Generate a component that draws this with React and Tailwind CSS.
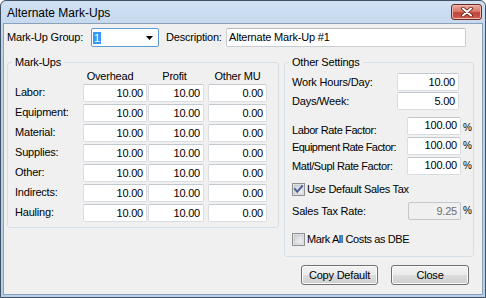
import React from 'react';

const markUps = [
  ['Labor:', '10.00', '10.00', '0.00'],
  ['Equipment:', '10.00', '10.00', '0.00'],
  ['Material:', '10.00', '10.00', '0.00'],
  ['Supplies:', '10.00', '10.00', '0.00'],
  ['Other:', '10.00', '10.00', '0.00'],
  ['Indirects:', '10.00', '10.00', '0.00'],
  ['Hauling:', '10.00', '10.00', '0.00'],
];

const Field = ({ value, className = '', disabled = false, top = false }) => (
  <div
    className={`h-[18px] shrink-0 flex justify-end pr-[3px] border rounded-[2px] leading-[13px] ${
      top ? 'items-start pt-[1px]' : 'items-center'
    } ${
      disabled
        ? 'bg-[#f0f0f0] border-[#c4c7cb] text-[#6d6d6d]'
        : 'bg-white border-[#d9dde1] border-t-[#c3c8ce]'
    } ${className}`}
  >
    {value}
  </div>
);

const CheckBox = ({ checked }) => (
  <svg width="13" height="13" viewBox="0 0 13 13" className="shrink-0">
    <defs>
      <linearGradient id={checked ? 'cbOn' : 'cbOff'} x1="0" y1="0" x2="1" y2="1">
        <stop offset="0" stopColor="#cbcfd5" />
        <stop offset="1" stopColor="#f7f7f7" />
      </linearGradient>
    </defs>
    <rect x="0.5" y="0.5" width="12" height="12" fill="#f4f4f4" stroke="#8e8f8f" />
    <rect x="2" y="2" width="9" height="9" fill={`url(#${checked ? 'cbOn' : 'cbOff'})`} stroke="#aeb3b9" strokeWidth="0.6" />
    {checked && (
      <path d="M3 6.2 L5.3 8.8 L10 3.2" fill="none" stroke="#4a5f97" strokeWidth="2" strokeLinecap="square" />
    )}
  </svg>
);

const WinButton = ({ children, className = '' }) => (
  <button
    className={`h-[20px] rounded-[3px] border border-[#707070] bg-[image:linear-gradient(#f2f2f2_0%,#ebebeb_50%,#dddddd_50%,#cfcfcf_100%)] shadow-[inset_0_0_0_1px_#fbfbfb] text-[11px] leading-[13px] text-black ${className}`}
  >
    {children}
  </button>
);

const CloseButton = () => (
  <div className="mt-[3px] mr-[3px] w-[31px] h-[16px] rounded-[3px] border border-[#6b2a25] bg-[image:linear-gradient(#e9a99b_0%,#d97b6c_45%,#c0433a_55%,#d0604f_100%)] shadow-[inset_0_0_0_1px_#f0b7aa] flex items-center justify-center">
    <svg width="12" height="10" viewBox="0 0 12 10">
      <path d="M2 1.5 L10 8.5 M10 1.5 L2 8.5" stroke="#5a1a14" strokeWidth="3.6" strokeLinecap="round" />
      <path d="M2 1.5 L10 8.5 M10 1.5 L2 8.5" stroke="#ffffff" strokeWidth="2" strokeLinecap="round" />
    </svg>
  </div>
);

const App = () => (
  <div className="w-[486px] h-[298px] flex flex-col border border-[#3f5166] rounded-t-[6px] bg-[image:linear-gradient(#d0e1f3,#bcd2ea_40px,#b7cfe8)] overflow-hidden font-['Liberation_Sans',Arial,sans-serif] text-[11px] text-black">
    <div className="h-[22px] shrink-0 flex items-start justify-between">
      <span className="ml-[6px] mt-[5px] text-[12px] leading-[14px]">Alternate Mark-Ups</span>
      <CloseButton />
    </div>

    <div className="flex-1 mx-[2px] mb-[2px] border border-[#8aa1b9] bg-[#f0f0f0] flex flex-col tracking-[-0.2px] whitespace-nowrap">
      <div className="mt-[4px] ml-[3px] flex items-center h-[19px]">
        <span className="w-[84px] leading-[13px]">Mark-Up Group:</span>
        <div className="w-[68px] h-[19px] border border-[#5c9bd6] rounded-[2px] bg-white flex items-center">
          <span className="ml-[1px] px-[1px] bg-[#3399ff] text-white leading-[12px]">1</span>
          <svg width="7" height="4" viewBox="0 0 7 4" className="ml-auto mr-[5px]">
            <path d="M0 0 H7 L3.5 4 Z" fill="#000" />
          </svg>
        </div>
        <span className="ml-[7px] w-[60px] leading-[13px]">Description:</span>
        <div className="w-[240px] h-[19px] border border-[#c9cdd2] border-t-[#b3b8be] rounded-[2px] bg-white flex items-center pl-[2px] leading-[13px]">
          Alternate Mark-Up #1
        </div>
      </div>

      <div className="mt-[9px] ml-[3px] flex items-start gap-[5px]">
        <fieldset className="w-[272px] h-[172px] border border-[#d5dfe5] rounded-[3px] p-0">
          <legend className="ml-[4px] px-[3px] leading-[13px]">Mark-Ups</legend>
          <div className="flex items-center h-[15px] pl-[7px]">
            <span className="w-[68px]" />
            <span className="w-[64px] text-center pr-[10px] leading-[13px]">Overhead</span>
            <span className="w-[56px] ml-[1px] text-center pr-[3px] leading-[13px]">Profit</span>
            <span className="w-[59px] ml-[4px] text-center leading-[13px]">Other MU</span>
          </div>
          <div className="flex flex-col gap-[2px]">
            {markUps.map(([label, a, b, c]) => (
              <div key={label} className="flex items-center h-[18px] pl-[7px]">
                <span className="w-[68px] leading-[13px] -mt-[2px]">{label}</span>
                <Field value={a} className="w-[64px]" />
                <Field value={b} className="w-[56px] ml-[1px]" />
                <Field value={c} className="w-[59px] ml-[4px]" />
              </div>
            ))}
          </div>
        </fieldset>

        <fieldset className="w-[190px] h-[201px] border border-[#d5dfe5] rounded-[3px] p-0">
          <legend className="ml-[4px] px-[3px] leading-[13px]">Other Settings</legend>
          <div className="flex flex-col">
            <div className="mt-[4px] flex items-center h-[18px] pl-[7px]">
              <span className="flex-1 leading-[13px]">Work Hours/Day:</span>
              <Field value="10.00" className="w-[62px]" />
              <span className="w-[14px]" />
            </div>
            <div className="mt-[1px] flex items-center h-[18px] pl-[7px]">
              <span className="flex-1 leading-[13px]">Days/Week:</span>
              <Field value="5.00" className="w-[62px]" />
              <span className="w-[14px]" />
            </div>
            <div className="mt-[7px] flex items-start h-[18px] pl-[7px]">
              <span className="flex-1 leading-[13px] mt-[7px] tracking-[-0.4px]">Labor Rate Factor:</span>
              <Field value="100.00" top className="w-[54px]" />
              <span className="w-[12px] pl-[2px] text-[10px] leading-[12px] mt-[5px]">%</span>
            </div>
            <div className="mt-[2px] flex items-center h-[18px] pl-[7px]">
              <span className="flex-1 min-w-0 leading-[13px] mt-[2px] tracking-[-0.55px]">Equipment Rate Factor:</span>
              <Field value="100.00" top className="w-[54px]" />
              <span className="w-[12px] pl-[2px] text-[10px] leading-[12px]">%</span>
            </div>
            <div className="mt-[2px] flex items-center h-[18px] pl-[7px]">
              <span className="flex-1 min-w-0 leading-[13px] tracking-[-0.4px]">Matl/Supl Rate Factor:</span>
              <Field value="100.00" top className="w-[54px]" />
              <span className="w-[12px] pl-[2px] text-[10px] leading-[12px]">%</span>
            </div>
            <div className="mt-[7px] flex items-center h-[14px] pl-[7px]">
              <CheckBox checked />
              <span className="ml-[2px] leading-[13px] tracking-[-0.3px]">Use Default Sales Tax</span>
            </div>
            <div className="mt-[6px] flex items-center h-[18px] pl-[7px]">
              <span className="flex-1 leading-[13px]">Sales Tax Rate:</span>
              <Field value="9.25" disabled className="w-[53px]" />
              <span className="w-[12px] pl-[2px] text-[10px] leading-[12px]">%</span>
            </div>
            <div className="mt-[12px] flex items-center h-[14px] pl-[7px]">
              <CheckBox checked={false} />
              <span className="ml-[2px] leading-[13px] tracking-[-0.4px]">Mark All Costs as DBE</span>
            </div>
          </div>
        </fieldset>
      </div>

      <div className="mt-[8px] flex justify-end gap-[13px] pr-[13px]">
        <WinButton className="w-[77px]">Copy Default</WinButton>
        <WinButton className="w-[78px]">Close</WinButton>
      </div>
    </div>
  </div>
);

export default App;
